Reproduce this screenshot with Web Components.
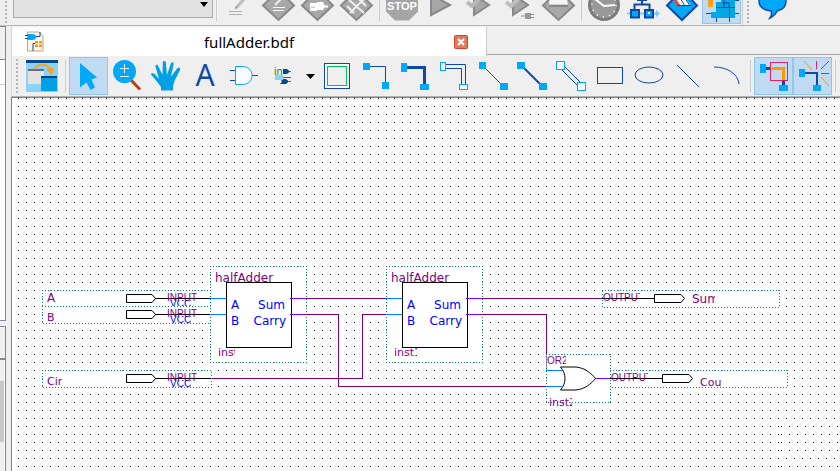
<!DOCTYPE html>
<html lang="en">
<head>
<meta charset="utf-8">
<title>fullAdder.bdf</title>
<style>
html, body { margin: 0; background: #efefef; }
body { font-family: "Noto Sans", sans-serif; color: #000; overflow: hidden; }
</style>
</head>
<body>
<ide-window></ide-window>
<script>
function define(name, html, setup) {
  const template = document.createElement('template');
  template.innerHTML = html;
  customElements.define(name, class extends HTMLElement {
    constructor() {
      super();
      this.attachShadow({ mode: 'open' }).append(template.content.cloneNode(true));
    }
    connectedCallback() { if (setup) setup(this, this.shadowRoot); }
  });
}

const NAVY = '#0f49a5', SKY = '#00a8f8';
const box = (x, y, w, h) => `<rect x="${x}" y="${y}" width="${w}" height="${h}" fill="${SKY}"/>`;
const frame = (x, y, w, h, c = SKY) => `<rect x="${x}" y="${y}" width="${w}" height="${h}" fill="#f4faff" stroke="${c}"/>`;
const stroke = (d, c = NAVY, w = 1) => `<path d="${d}" fill="none" stroke="${c}" stroke-width="${w}"/>`;
const diamond = '<path d="M19.500 1 35 16.500 19.500 31 4 16.500Z" fill="#a8a8a8" stroke="#888" stroke-width="2"/>';
const play = x => `<path d="M${x} 5.500V26L28 16Z" fill="#a6a6a6" stroke="#888" stroke-width="2"/>`;

/* Every icon is drawn on a 39 x 32 field. */
const icons = {
  edit: stroke('M9 22.500H22M9 25.500H22', '#b0b0b0') + stroke('M16 19 26 8', '#bbb', 3) + stroke('M15 20 17 17', '#888', 1),
  compileEdit: diamond + stroke('M14 18.500H26M14 21.500H25', '#fff') + stroke('M16 16 24 8', '#eee', 2),
  compilePlug: diamond + '<path d="M12 14H19V13H25L27 17.500 25 21H19V22H12Z" fill="#fff"/>' + stroke('M26 17.500H30', '#fff', 2) + stroke('M14 17.500V19M16 17.500V19', '#999'),
  compileCross: diamond + stroke('M12 11 27 24M27 10 13 24M10 17 17 24M21 9 29 17', '#eee', 2),
  stop: '<path d="M12.500 0H25.500L35 9.500V22.500L26 31.500H12L3 22.500V9.500Z" fill="#a5a5a5"/><text x="19" y="21" text-anchor="middle" font-family="Liberation Sans, sans-serif" font-size="11" font-weight="700" fill="#fff">STOP</text>',
  play: play(9),
  playCheck: play(13) + stroke('M6 13 11 17 18 10', '#b8b8b8', 4),
  playPlug: play(13) + stroke('M6 13 11 17 18 10', '#c0c0c0', 4) + '<path d="M25 24H31V30H25Z" fill="#999"/>' + stroke('M21 27H25M31 25.500H34M31 28.500H34', '#888'),
  assembler: diamond + '<path d="M11 5H27L29 15.500H10Z" fill="#f4f4f4"/>' + stroke('M10 17H29', '#888', 2),
  clock: '<circle cx="19" cy="16" r="14.500" fill="#999" stroke="#7c7c7c" stroke-width="3"/><circle cx="19" cy="16" r="12" fill="none" stroke="#fff" stroke-width="1.500" stroke-dasharray="1.200 5.080"/>' + stroke('M10 10 19 17 30 16', '#fff', 2),
  hierarchy: stroke('M3 24.500H33', '#7cc8f0', 2) + '<path d="M32 21 36 24.500 32 28Z" fill="#7cc8f0"/>' + stroke('M18 5V15.500M10.500 20V15.500H25.500V20M13 11H23', NAVY, 2)
    + `<path d="M7 21H15V28.500H7ZM21 21H29V28.500H21Z" fill="${SKY}" stroke="${NAVY}" stroke-width="2"/><rect x="24" y="23" width="2" height="2" fill="#fff"/>`,
  program: `<path d="M19 1 34 16.500 19 31 4 16.500Z" fill="${SKY}" stroke="${NAVY}" stroke-width="2"/><path d="M11 8H22L28 17H15Z" fill="#fff"/>` + stroke('M12 11 16 17', '#e43', 3) + stroke('M17 9 22 17M22 9 27 17M14 16.500H29', NAVY),
  chip: '<path d="M9 23H14V13H19V2H33V29H9Z" fill="#00a8e8"/>' + stroke('M4 24.500H9M33 24.500H37M14.500 29V33M27.500 19V33M33 11.500H37M14.500 18.500H22V8M22 18.500H33M20 14H27V19', NAVY) + '<rect x="6" y="9" width="5" height="9" fill="#f9a01b"/>',
  help: `<path d="M20 1C28 1 33 6 33 12C33 18 29 21 24 22C23 25 21 27 17 29C19 26 19 24 18 22C10 21 6 17 6 12C6 6 11 1 20 1Z" fill="${SKY}" stroke="${NAVY}" stroke-width="1.500"/>`,

  swap: '<rect x="3" width="32" height="32" fill="#8bd3f5"/><rect x="3" width="32" height="3" fill="#004a8f"/><rect x="5" y="9" width="16" height="15" fill="#e2e2e0"/><rect x="5" y="9" width="16" height="2" fill="#6c6c74"/><rect x="18" y="16" width="16" height="15" fill="#00a0e8"/><rect x="18" y="16" width="16" height="2" fill="#003f80"/>'
    + stroke('M11 9C15 3 25 3 28 11', '#f9a51a', 2) + '<path d="M23 9 31 7.500 29 15.500Z" fill="#f9a51a"/>',
  pointer: `<path d="M11 3 28 17.500 22.500 19.500 26 27.500 21.500 30 17.500 22.500 11 27.500Z" fill="${SKY}"/>`,
  zoom: stroke('M23 20 32 29.500', '#c23c16', 3) + `<circle cx="16.500" cy="11.500" r="11.500" fill="${SKY}"/>` + stroke('M12 8.500H21M16.500 4V13M12 16.500H21', '#fff'),
  hand: `<path d="M3.500 14C5 12.500 7 13 8.500 15L12 19 8.500 6.500C8.200 4.500 10.500 4 11.200 6L15.500 15 15.800 2C16 .5 18.600 .5 18.800 2L20 15 24 3C25 1.500 27 2.500 26.600 4.500L24 16.500 30.500 8C32 6.500 34 8 33 10L27.500 21C26 25 26 27 26 30.500H14V27C12 24 7 18 3.500 14Z" fill="#00a0e8"/>`,
  text: `<text x="19" y="26" text-anchor="middle" font-family="Noto Sans" font-size="30" fill="${NAVY}">A</text>`,
  gate: stroke('M5 10.500H10M5 20.500H10M27 15.500H33') + `<path d="M10.500 6.500H17.500C23.500 6.500 27 10.500 27 15.500C27 20.500 23.500 24.500 17.500 24.500H10.500Z" fill="#f6fbff" stroke="${SKY}"/>`,
  block: '<text x="10" y="15" font-family="Noto Sans" font-size="10" fill="#2a7a2a">in</text><path d="M19 9H23L26 11.500 23 14H19ZM16 19H22L25 21.500 22 24H16L18 21.500Z" fill="#004a8f"/><rect x="11" y="15" width="8" height="5" fill="#8bd3f5"/>' + stroke('M25 11.500H27M19 17.500H27M25 21.500H27', '#e02040'),
  symbol: frame(6.5, 3.5, 25, 25, NAVY) + '<rect x="9.500" y="6.500" width="19" height="19" fill="#efefef" stroke="#00c455"/>',
  node: stroke('M13 6.500H28.500V22') + box(6, 3, 7, 7) + box(25, 22, 7, 7),
  bus: stroke('M11 7.500H28.500V24', NAVY, 3) + box(5, 3, 6, 9) + box(24, 24, 9, 6),
  conduit: stroke('M10.500 4.500H30.500V24M10.500 8.500H26.500V24') + frame(5.5, 2.5, 5, 8) + frame(24.5, 24.5, 8, 5),
  diagNode: stroke('M11 8 28 25') + box(5, 2, 7, 7) + box(26, 23, 8, 7),
  diagBus: stroke('M11 8 28 25', NAVY, 2) + box(4, 2, 8, 7) + box(26, 23, 8, 7),
  diagConduit: stroke('M13 7 29 23M9 9 26 26') + frame(4.5, 1.5, 8, 8) + frame(25.5, 22.5, 8, 8),
  rect: `<rect x="6.500" y="7.500" width="25" height="16" fill="none" stroke="${NAVY}"/>`,
  ellipse: `<ellipse cx="19" cy="15" rx="14" ry="8" fill="none" stroke="${NAVY}"/>`,
  line: stroke('M8 5 30 27'),
  arc: stroke('M6 7C18 7 30 13 31 24'),
  rubberband: stroke('M12 8.500H16M29.500 21V25', NAVY, 3) + stroke('M18 8.500H29.500V20', '#ff9800', 3) + '<rect x="16.500" y="2.500" width="17" height="18" fill="none" stroke="#e91e63"/>' + box(6, 4, 6, 9) + box(25, 25, 9, 6),
  partial: stroke('M12 13H24V25', NAVY, 2) + stroke('M11 1 19 10M28 17 36 26', '#ff9800') + stroke('M23.500 1V9M28 9 36 1M28 13.500H36', '#e91e63') + box(6, 9, 6, 8) + box(20, 25, 8, 6),
  file: '<path d="M3.500 1H15L19 5V20H3.500Z" fill="#fdf6e3" stroke="#b9a98a"/>' + stroke('M1 4.500H5M1 7.500H5M12 5.500H16V1M9 20V12.500H12', NAVY) + '<path d="M4 3H8C11 3 12 4 12 5.500C12 7.500 11 9 8 9H4Z" fill="#00a8f8"/><rect x="11" y="10" width="7" height="6" fill="#ff9800"/><path d="M14.500 10V16M11 13H18" stroke="#fff"/>'
};

define('ide-icon', `
<style>:host{display:block} svg{display:block;overflow:visible}</style><svg aria-hidden="true"></svg>`,
(host, root) => {
  const svg = root.querySelector('svg');
  const small = host.getAttribute('name') === 'file';
  const w = small ? 20 : 39, h = small ? 21 : 32;
  svg.setAttribute('width', w);
  svg.setAttribute('height', h);
  svg.setAttribute('viewBox', `0 0 ${w} ${h}`);
  svg.innerHTML = icons[host.getAttribute('name')] || '';
});

define('tool-button', `
<style>
:host{display:block;flex:none}
button{display:block;box-sizing:border-box;border:1px solid transparent;background:none;padding:2px 0;margin:0;width:39px}
:host([pressed]) button{background:#c0dbf1;border-color:#90c5f0}
ide-icon{margin:0 -1px}
</style>
<button type="button"></button>`,
(host, root) => {
  const b = root.querySelector('button');
  b.setAttribute('aria-label', host.getAttribute('label'));
  if (host.hasAttribute('pressed')) b.setAttribute('aria-pressed', 'true');
  const icon = document.createElement('ide-icon');
  icon.setAttribute('name', host.getAttribute('icon'));
  b.replaceChildren(icon);
});

define('tool-divider', `
<style>:host{display:block;flex:none;width:1px;height:32px;margin:0 3px;background:#cdcdcd}</style>`);

define('tool-grip', `
<style>:host{display:block;flex:none;width:2px;height:34px;background:repeating-linear-gradient(#b4b4b4 0 2px,transparent 2px 4px)}</style>`);

define('tool-menu', `
<style>
:host{display:block;flex:none}
button{display:flex;align-items:center;justify-content:center;width:15px;height:32px;padding:0;border:0;background:none}
svg{display:block}
</style>
<button type="button" aria-label="Block tool menu"><svg width="9" height="5"><path d="M0 0H9L4.500 5Z"/></svg></button>`);

define('tool-select', `
<style>
:host{display:block;position:relative;flex:none;width:200px}
select{display:block;box-sizing:border-box;width:100%;height:28px;border:1px solid #aaa;background:#e1e1e1;appearance:none}
svg{position:absolute;right:5px;top:12px;pointer-events:none}
</style>
<select aria-label="Revision"><option></option></select><svg width="8" height="5"><path d="M0 0H8L4 5Z"/></svg>`);

define('tool-bar', `
<style>
:host{display:flex;align-items:center;overflow:hidden;background:#efefef}
</style><slot></slot>`);

define('editor-tab', `
<style>
:host{display:flex;align-items:center;box-sizing:border-box;flex:0 0 475px;height:29px;padding:0 18px 0 12px;background:#fff;border-right:1px solid #c8c8c8}
.tab{flex:1;min-width:0;padding:0;border:0;background:none;font:15px/28px "Noto Sans",sans-serif;color:#000}
.close{display:block;width:14px;height:14px;padding:0;border:0;background:none}
svg{display:block}
</style>
<ide-icon name="file"></ide-icon>
<button class="tab" type="button" role="tab" aria-selected="true"><slot></slot></button>
<button class="close" type="button" aria-label="Close"><svg width="14" height="14"><rect x=".5" y=".5" width="13" height="13" rx="1" fill="#e2795c" stroke="#d0402a"/><path d="M4 4 10 10M10 4 4 10" stroke="#fff" stroke-width="2"/></svg></button>`);

define('side-dock', `
<style>
:host{display:flex;flex-direction:column;gap:5px;flex:0 0 6px;margin-right:5px}
section{display:flex;flex-direction:column;box-sizing:border-box;border:1px solid #858592;border-left:0;background:#fff;min-height:0}
.files{flex:295}
.tasks{flex:145;border-bottom:0}
.head{flex:none;height:32px;background:#f0f0f0;border-bottom:1px solid #858592}
.tasks .head{height:31px;border-bottom-width:2px}
.cell{flex:none;height:24px;border-bottom:1px solid #d0d0d0}
.track{flex:1;padding-top:21px;background:#efefef;margin-right:1px}
.thumb{height:61px;background:#c8c8c8}
</style>
<section class="files"><div class="head"></div><div class="cell"></div></section>
<section class="tasks"><div class="head"></div><div class="track"><div class="thumb"></div></div></section>`);

/* Schematic symbols. Each is a node placed on the free canvas by its top left corner. */
const nodeStyle = `
<style>
:host{display:block;position:absolute}
svg{display:block;overflow:visible}
text{font-family:"DejaVu Sans",sans-serif;font-size:12px;fill:purple}
.small{font-size:11px}
.kind{font-family:"Liberation Sans",sans-serif;font-size:10px}
.port{fill:#00f}
.outline{fill:#fff;stroke:teal;stroke-dasharray:1 2;stroke-dashoffset:.5}
.body{fill:#fff;stroke:#000}
.wire{fill:none;stroke:#000}
.in{fill:none;stroke:#0080ff}
.out{fill:none;stroke:#8000ff}
</style><svg></svg>`;
const clipped = (x, y, w, h, base, cls, t) =>
  `<svg x="${x}" y="${y}" width="${w}" height="${h}" style="overflow:hidden"><text class="${cls}" y="${base}">${t}</text></svg>`;
const draw = (root, w, h, content) => {
  const svg = root.querySelector('svg');
  svg.setAttribute('width', w);
  svg.setAttribute('height', h);
  svg.innerHTML = `<rect class="outline" x=".5" y=".5" width="${w - 1}" height="${h - 1}"/>` + content;
};

define('input-pin', nodeStyle, (host, root) => {
  const low = host.hasAttribute('low');
  draw(root, 170, 18,
    clipped(5, 1, 15, 17, low ? 14 : 11, low ? 'small' : '', host.getAttribute('name')) +
    '<path class="body" d="M84.500 4.500H110L113.500 8.500 110 12.500H84.500Z"/><path class="wire" d="M113 8.500H169"/>' +
    '<text class="kind" x="125" y="11">INPUT</text>' +
    clipped(128, 10, 24, host.hasAttribute('cut') ? 6 : 9, 7, 'kind port', 'VCC'));
});

define('output-pin', nodeStyle, (host, root) => {
  const low = host.hasAttribute('low');
  draw(root, 178, 18,
    '<path class="wire" d="M0 8.500H52"/>' + clipped(1, 1, 37, 12, 10, 'kind', 'OUTPUT') +
    '<path class="body" d="M52.500 4.500H79L82.500 8.500 79 12.500H52.500Z"/>' +
    clipped(90, 1, low ? 22 : 23, 16, low ? 15 : 12, low ? 'small' : '', host.getAttribute('name')));
});

define('adder-block', nodeStyle, (host, root) => {
  draw(root, 97, 97,
    '<text x="5" y="16">halfAdder</text><path class="in" d="M0 32.500H16M0 48.500H16"/>' +
    '<rect class="body" x="16.500" y="16.500" width="65" height="65"/>' +
    '<path class="out" d="M80 32.500H97M80 48.500H97"/>' +
    '<text class="port" x="21" y="43">A</text><text class="port" x="21" y="59">B</text>' +
    '<text class="port" x="75" y="43" text-anchor="end">Sum</text><text class="port" x="76" y="59" text-anchor="end">Carry</text>' +
    clipped(8, 80, host.getAttribute('name') === 'inst' ? 17 : 23, 14, 10, 'small', host.getAttribute('name')));
});

define('or-gate', nodeStyle, (host, root) => {
  draw(root, 65, 49,
    clipped(1, 1, 19, 12, 9, 'kind', 'OR2') +
    '<path class="in" d="M0 16.500H16M0 32.500H16"/><path class="out" d="M49 24.500H65"/>' +
    '<path class="body" d="M14.500 13H30C39 14 45 19 49.500 24.500C45 30 39 35 30 36H14.500C20.500 29 20.500 20 14.500 13Z"/>' +
    clipped(3, 40, 23, 15, 12, 'small', host.getAttribute('name')));
});

define('schematic-canvas', `
<style>
:host{display:block;position:relative;overflow:hidden;background:#fff;border-left:1px solid #80808c;border-top:1px solid #80808c}
.sheet{display:block;width:100%;height:100%}
.nets{fill:none;stroke:purple}
</style>
<svg class="sheet" aria-hidden="true">
<defs>
<pattern id="grid" x="6" width="8" height="8" patternUnits="userSpaceOnUse"><rect width="1" height="1"/></pattern>
<pattern id="grid-edge" x="1" width="8" height="8" patternUnits="userSpaceOnUse"><rect width="1" height="1"/></pattern>
</defs>
<rect width="100%" height="100%" fill="url(#grid)"/>
<g><rect x="768" y="326" width="100%" height="30" fill="#fff"/><rect x="768" y="326" width="100%" height="30" fill="url(#grid-edge)"/>
<rect x="768" y="364" width="100%" height="8" fill="#fff"/><rect x="768" y="364" width="100%" height="8" fill="url(#grid-edge)"/></g>
<path class="nets" d="M294 200.500H375M294 216.500H326.500V288.500H535M198 280.500H350.500V216.500H375M470 200.500H591M470 216.500H534.500V273"/>
</svg>
<slot></slot>`);

define('ide-window', `
<style>
:host{display:flex;flex-direction:column;height:100vh}
.main-tools{flex:none;height:25px;align-items:flex-end;border-bottom:1px solid #b8b8b8;padding-left:5px}
.main-tools tool-select{margin:0 0 7px 6px}
.main-tools tool-divider{margin-bottom:4px}
.main-tools tool-grip{margin-bottom:2px}
.main-tools tool-button{margin-bottom:1px}
.main-tools .edge{height:100%;margin:0 4px 0 1px}
.main-tools .last{margin-left:4px}
.work{flex:1;display:flex;min-height:0}
.editor{flex:1;min-width:0;display:flex;flex-direction:column}
.tabs{display:flex;flex:none;padding-top:1px;border-left:1px solid #d8d8d8;background:#efefef}
.rest{flex:1;border-bottom:1px solid #a0a0a0;margin-bottom:1px}
.edit-tools{flex:none;height:40px;padding-left:4px;border-left:1px solid #d8d8d8;border-bottom:1px solid #b0b0b0}
.edit-tools tool-grip{margin-right:5px}
schematic-canvas{flex:1}
</style>
<tool-bar class="main-tools">
<tool-grip></tool-grip><tool-select></tool-select><tool-divider></tool-divider>
<tool-button icon="edit" label="Edit"></tool-button><tool-button icon="compileEdit" label="Settings"></tool-button><tool-button icon="compilePlug" label="Pin planner"></tool-button><tool-button icon="compileCross" label="Chip planner"></tool-button>
<tool-divider></tool-divider>
<tool-button icon="stop" label="Stop"></tool-button><tool-button icon="play" label="Start compilation"></tool-button><tool-button icon="playCheck" label="Start analysis"></tool-button><tool-button icon="playPlug" label="Start I/O analysis"></tool-button><tool-button icon="assembler" label="Assembler"></tool-button>
<tool-divider></tool-divider>
<tool-button icon="clock" label="Timing analyzer"></tool-button><tool-button icon="hierarchy" label="Netlist viewer"></tool-button><tool-button icon="program" label="Programmer"></tool-button><tool-button icon="chip" label="Platform designer" pressed></tool-button>
<tool-divider class="edge"></tool-divider><tool-grip></tool-grip>
<tool-button class="last" icon="help" label="Support"></tool-button>
</tool-bar>
<div class="work">
<side-dock></side-dock>
<main class="editor">
<div class="tabs"><editor-tab>fullAdder.bdf</editor-tab><div class="rest"></div></div>
<tool-bar class="edit-tools">
<tool-grip></tool-grip>
<tool-button icon="swap" label="Detach window"></tool-button><tool-divider></tool-divider>
<tool-button icon="pointer" label="Selection tool" pressed></tool-button><tool-button icon="zoom" label="Zoom tool"></tool-button><tool-button icon="hand" label="Hand tool"></tool-button><tool-button icon="text" label="Text tool"></tool-button><tool-button icon="gate" label="Symbol tool"></tool-button><tool-button icon="block" label="Block tool"></tool-button><tool-menu></tool-menu>
<tool-button icon="symbol" label="Block"></tool-button><tool-button icon="node" label="Orthogonal node"></tool-button><tool-button icon="bus" label="Orthogonal bus"></tool-button><tool-button icon="conduit" label="Orthogonal conduit"></tool-button><tool-button icon="diagNode" label="Diagonal node"></tool-button><tool-button icon="diagBus" label="Diagonal bus"></tool-button><tool-button icon="diagConduit" label="Diagonal conduit"></tool-button><tool-button icon="rect" label="Rectangle"></tool-button><tool-button icon="ellipse" label="Oval"></tool-button><tool-button icon="line" label="Line"></tool-button><tool-button icon="arc" label="Arc"></tool-button>
<tool-divider></tool-divider>
<tool-button icon="rubberband" label="Rubberbanding" pressed></tool-button><tool-button icon="partial" label="Partial line selection" pressed></tool-button>
<tool-divider></tool-divider>
</tool-bar>
<schematic-canvas>
<input-pin name="A" cut style="left:30px;top:192px"></input-pin>
<input-pin name="B" low style="left:30px;top:208px"></input-pin>
<input-pin name="Cin" low style="left:30px;top:272px"></input-pin>
<adder-block name="inst" style="left:198px;top:168px"></adder-block>
<adder-block name="inst1" style="left:374px;top:168px"></adder-block>
<or-gate name="inst2" style="left:534px;top:256px"></or-gate>
<output-pin name="Sum" style="left:590px;top:192px"></output-pin>
<output-pin name="Cout" low style="left:598px;top:272px"></output-pin>
</schematic-canvas>
</main>
</div>`);
</script>
</body>
</html>
